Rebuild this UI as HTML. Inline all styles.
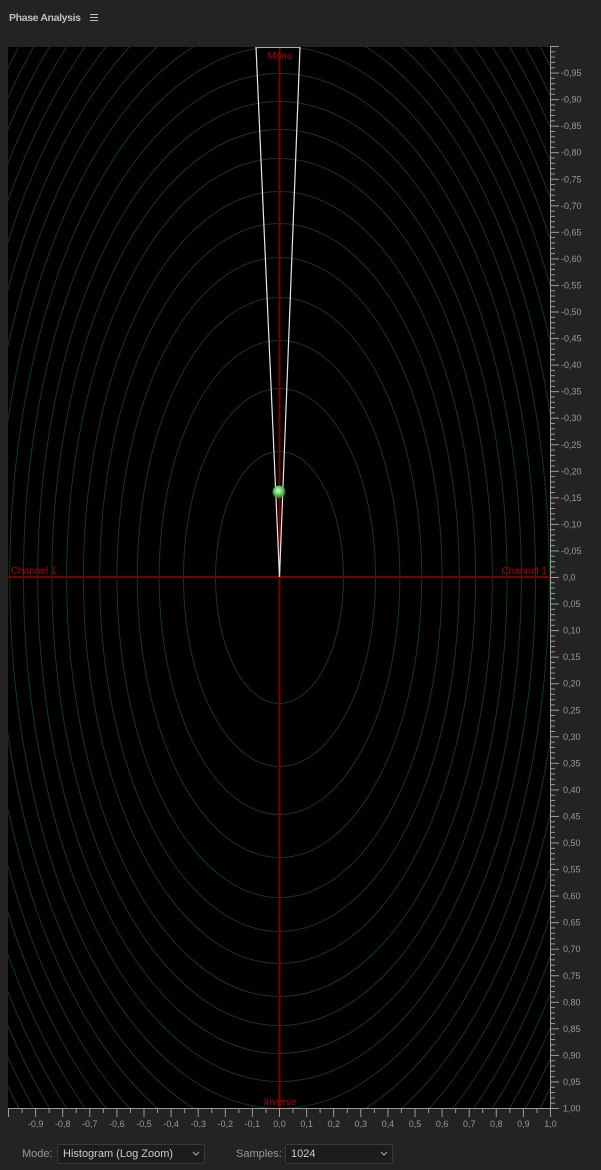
<!DOCTYPE html>
<html><head><meta charset="utf-8"><style>
html,body{margin:0;padding:0;background:#232323;width:601px;height:1170px;overflow:hidden;font-family:"Liberation Sans",sans-serif}
svg{position:absolute;left:0;top:0;display:block}
</style></head><body>
<svg id="s" width="601" height="1170" xmlns="http://www.w3.org/2000/svg">
<text x="9" y="21" font-size="10.5" font-weight="bold" fill="#b9c1cc" font-family="Liberation Sans, sans-serif" textLength="72">Phase Analysis</text>
<g stroke="#b9c1cc" stroke-width="1"><line x1="90" y1="14.5" x2="98" y2="14.5"/><line x1="90" y1="17.5" x2="98" y2="17.5"/><line x1="90" y1="20.5" x2="98" y2="20.5"/></g>
<defs><clipPath id="c"><rect x="8" y="47" width="542" height="1061"/></clipPath>
<radialGradient id="g" cx="0.45" cy="0.4" r="0.6"><stop offset="0" stop-color="#d8ffd8"/><stop offset="0.5" stop-color="#5fd35f"/><stop offset="1" stop-color="#2a8a2a" stop-opacity="0.6"/></radialGradient></defs>
<rect x="8" y="47" width="542" height="1061" fill="#000"/>
<g id="ell" clip-path="url(#c)" fill="none" stroke="#0b400b" stroke-width="1"></g>
<g clip-path="url(#c)">
<rect x="8" y="576" width="542" height="2" fill="#7a0000"/>
<rect x="278.5" y="47" width="2" height="1061" fill="#7a0000"/>
<polyline points="256,47 279.5,577 300,47" fill="none" stroke="#e8e8e8" stroke-width="1.2"/>
<line x1="256" y1="47.5" x2="300" y2="47.5" stroke="#aaa"/>
<circle cx="279" cy="492" r="6.5" fill="url(#g)"/>
</g>
<g font-size="10" fill="#b00000" font-family="Liberation Sans, sans-serif">
<text x="280" y="59" text-anchor="middle">Mono</text>
<text x="280" y="1105" text-anchor="middle">Inverse</text>
<text x="11" y="574">Channel 1</text>
<text x="547" y="574" text-anchor="end">Channel 1</text>
</g>
<g id="ax" stroke="#9a9a9a" stroke-width="1"></g>
<g id="lab" font-size="9" fill="#8f9aa6" font-family="Liberation Sans, sans-serif"></g>
<text x="22" y="1157" font-size="11" fill="#8f9aa6" font-family="Liberation Sans, sans-serif">Mode:</text>
<rect x="57.5" y="1144.5" width="147" height="19" rx="2" fill="#1c1c1c" stroke="#3a3a3a"/>
<text x="63" y="1157" font-size="11" fill="#c8ccd2" font-family="Liberation Sans, sans-serif">Histogram (Log Zoom)</text>
<polyline points="193,1152 196,1155 199,1152" fill="none" stroke="#aaa"/>
<text x="236" y="1157" font-size="11" fill="#8f9aa6" font-family="Liberation Sans, sans-serif">Samples:</text>
<rect x="285.5" y="1144.5" width="107" height="19" rx="2" fill="#1c1c1c" stroke="#3a3a3a"/>
<text x="291" y="1157" font-size="11" fill="#c8ccd2" font-family="Liberation Sans, sans-serif">1024</text>
<polyline points="381,1152 384,1155 387,1152" fill="none" stroke="#aaa"/>
</svg>
<script>
var NS="http://www.w3.org/2000/svg";
function el(p,n,a){var e=document.createElementNS(NS,n);for(var k in a)e.setAttribute(k,a[k]);p.appendChild(e);return e;}
var ell=document.getElementById('ell');
var rys=[126,189,237,280,320,354,386,419,448,476,504],d=27;
while(rys[rys.length-1]<800){rys.push(rys[rys.length-1]+d);d=Math.max(20,d-0.8);}
rys.forEach(function(r){el(ell,'ellipse',{cx:279.5,cy:577.5,rx:r*0.508,ry:r});});
var ax=document.getElementById('ax'),lab=document.getElementById('lab');
el(ax,'line',{x1:550.5,y1:47,x2:550.5,y2:1109});
el(ax,'line',{x1:8,y1:1108.5,x2:551,y2:1108.5});
for(var i=-100;i<=100;i++){
 var y=577.5+i*5.31;
 var maj=(i%5==0);
 el(ax,'line',{x1:550,y1:y,x2:maj?559:555,y2:y});
 if(maj&&i>-100){
  var v=Math.abs(i)/100, s;
  if(i==0)s="0,0";else s=(i<0?"-":"")+v.toFixed(2).replace('.',',');
  var t=el(lab,'text',{x:i<0?561:563,y:y+3});t.textContent=s;
 }
}
for(var j=-20;j<=20;j++){
 var x=279.5+j*13.55;
 var mj=(j%2==0);
 el(ax,'line',{x1:x,y1:1108,x2:x,y2:mj?1117:1113});
 if(mj&&j>-20){
  var vv=j/20, ss;
  if(j==0)ss="0,0";else if(j==20)ss="1,0";else ss=(vv<0?"-":"")+Math.abs(vv).toFixed(1).replace('.',',');
  var tt=el(lab,'text',{x:x,y:1127,'text-anchor':'middle'});tt.textContent=ss;
 }
}
</script>
</body></html>
